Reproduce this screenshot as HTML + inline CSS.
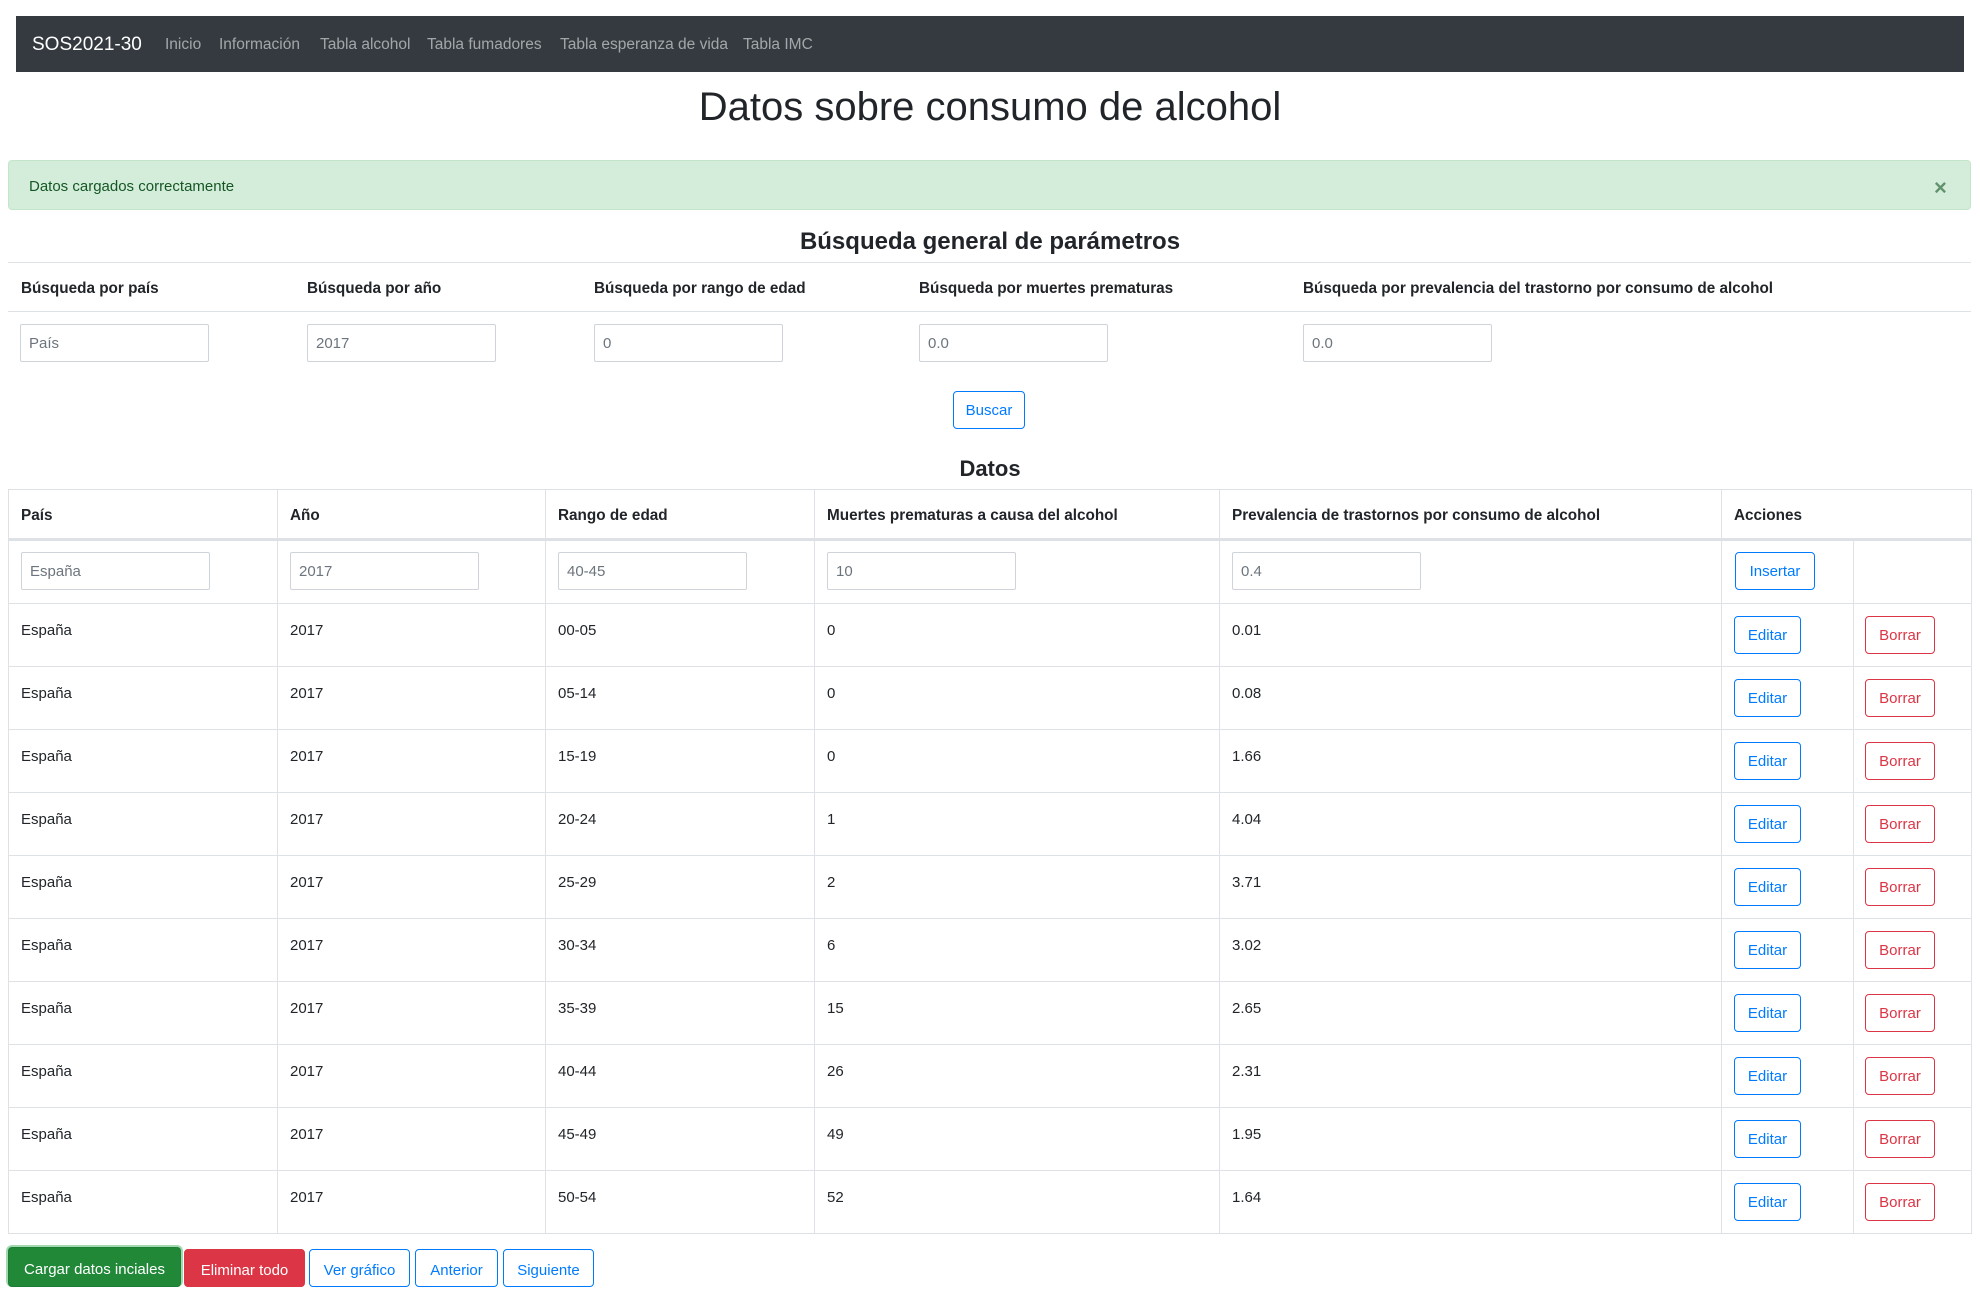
<!DOCTYPE html>
<html><head><meta charset="utf-8"><style>
*{box-sizing:border-box;margin:0;padding:0}
body{width:1980px;height:1280px;overflow:hidden;background:#fff;font-family:"Liberation Sans",sans-serif;font-size:16px;color:#212529;position:relative}
.a{position:absolute;white-space:nowrap}
.nav{left:16px;top:16px;width:1948px;height:56px;background:#343a40}
.nl{color:rgba(255,255,255,.55);font-size:15.5px}
.hl{position:absolute;height:1px;background:#dee2e6}
.vl{position:absolute;width:1px;background:#dee2e6}
.inp{position:absolute;border:1px solid #ced4da;border-radius:2px;height:38px;color:#6c757d;font-size:15px;line-height:38px;padding-left:8px;width:189px}
.b{position:absolute;border:1px solid #007bff;border-radius:4px;color:#007bff;font-size:15px;text-align:center;line-height:38px;height:38px}
.r{border-color:#dc3545;color:#dc3545}
.th{font-weight:bold;font-size:15.3px}
.td{font-size:15px}
</style></head><body>
<div class="a nav"></div>
<div class="a" style="left:32px;top:34px;color:#fff;font-size:19px">SOS2021-30</div>
<div class="a nl" style="left:165px;top:36px">Inicio</div>
<div class="a nl" style="left:219px;top:36px">Información</div>
<div class="a nl" style="left:320px;top:36px">Tabla alcohol</div>
<div class="a nl" style="left:427px;top:36px">Tabla fumadores</div>
<div class="a nl" style="left:560px;top:36px">Tabla esperanza de vida</div>
<div class="a nl" style="left:743px;top:36px">Tabla IMC</div>
<div class="a" style="left:0;width:1980px;text-align:center;top:82px;font-size:40px;line-height:50px">Datos sobre consumo de alcohol</div>
<div class="a" style="left:8px;top:160px;width:1963px;height:50px;background:#d4edda;border:1px solid #c3e6cb;border-radius:4px"></div>
<div class="a" style="left:29px;top:178px;color:#155724;font-size:15px">Datos cargados correctamente</div>
<div class="a" style="left:1934px;top:175px;color:#155724;font-size:22px;font-weight:bold;opacity:.6">×</div>
<div class="a" style="left:0;width:1980px;text-align:center;top:228px;font-size:24px;font-weight:bold">Búsqueda general de parámetros</div>
<div class="hl" style="left:8px;top:262px;width:1963px"></div>
<div class="hl" style="left:8px;top:311px;width:1963px"></div>
<div class="a th" style="left:21px;top:280px">Búsqueda por país</div>
<div class="a th" style="left:307px;top:280px">Búsqueda por año</div>
<div class="a th" style="left:594px;top:280px">Búsqueda por rango de edad</div>
<div class="a th" style="left:919px;top:280px">Búsqueda por muertes prematuras</div>
<div class="a th" style="left:1303px;top:280px">Búsqueda por prevalencia del trastorno por consumo de alcohol</div>
<div class="inp" style="left:20px;top:324px">País</div>
<div class="inp" style="left:307px;top:324px">2017</div>
<div class="inp" style="left:594px;top:324px">0</div>
<div class="inp" style="left:919px;top:324px">0.0</div>
<div class="inp" style="left:1303px;top:324px">0.0</div>
<div class="b" style="left:953px;top:391px;width:72px">Buscar</div>
<div class="a" style="left:0;width:1980px;text-align:center;top:456px;font-size:22px;font-weight:bold">Datos</div>
<div class="hl" style="left:8px;top:489px;width:1963px"></div>
<div class="hl" style="left:8px;top:538px;width:1963px;height:3px"></div>
<div class="vl" style="left:8px;top:489px;height:745px"></div>
<div class="vl" style="left:277px;top:489px;height:745px"></div>
<div class="vl" style="left:545px;top:489px;height:745px"></div>
<div class="vl" style="left:814px;top:489px;height:745px"></div>
<div class="vl" style="left:1219px;top:489px;height:745px"></div>
<div class="vl" style="left:1721px;top:489px;height:745px"></div>
<div class="vl" style="left:1853px;top:541px;height:693px"></div>
<div class="vl" style="left:1971px;top:489px;height:745px"></div>
<div class="a th" style="left:21px;top:507px">País</div>
<div class="a th" style="left:290px;top:507px">Año</div>
<div class="a th" style="left:558px;top:507px">Rango de edad</div>
<div class="a th" style="left:827px;top:507px">Muertes prematuras a causa del alcohol</div>
<div class="a th" style="left:1232px;top:507px">Prevalencia de trastornos por consumo de alcohol</div>
<div class="a th" style="left:1734px;top:507px">Acciones</div>
<div class="inp" style="left:21px;top:552px">España</div>
<div class="inp" style="left:290px;top:552px">2017</div>
<div class="inp" style="left:558px;top:552px">40-45</div>
<div class="inp" style="left:827px;top:552px">10</div>
<div class="inp" style="left:1232px;top:552px">0.4</div>
<div class="b" style="left:1735px;top:552px;width:80px">Insertar</div>
<div id="rows"></div>
<script>
var d=[["00-05","0","0.01"],["05-14","0","0.08"],["15-19","0","1.66"],["20-24","1","4.04"],["25-29","2","3.71"],["30-34","6","3.02"],["35-39","15","2.65"],["40-44","26","2.31"],["45-49","49","1.95"],["50-54","52","1.64"]];
var h="";
for(var i=0;i<10;i++){var t=603+i*63;
h+='<div class="hl" style="left:8px;top:'+t+'px;width:1963px"></div>';
h+='<div class="a td" style="left:21px;top:'+(t+19)+'px">España</div><div class="a td" style="left:290px;top:'+(t+19)+'px">2017</div><div class="a td" style="left:558px;top:'+(t+19)+'px">'+d[i][0]+'</div><div class="a td" style="left:827px;top:'+(t+19)+'px">'+d[i][1]+'</div><div class="a td" style="left:1232px;top:'+(t+19)+'px">'+d[i][2]+'</div>';
h+='<div class="b" style="left:1734px;top:'+(t+13)+'px;width:67px">Editar</div><div class="b r" style="left:1865px;top:'+(t+13)+'px;width:70px">Borrar</div>';}
h+='<div class="hl" style="left:8px;top:1233px;width:1963px"></div>';
document.getElementById("rows").innerHTML=h;
</script>
<div class="a" style="left:6px;top:1245px;width:177px;height:42px;border-radius:6px;background:#a3d9b0"></div>
<div class="b" style="left:8px;top:1247px;width:173px;height:40px;line-height:44px;background:#218838;border-color:#1e7e34;color:#fff">Cargar datos inciales</div>
<div class="b r" style="left:184px;top:1249px;width:121px;line-height:42px;background:#dc3545;color:#fff">Eliminar todo</div>
<div class="b" style="left:309px;top:1249px;width:101px;line-height:42px">Ver gráfico</div>
<div class="b" style="left:415px;top:1249px;width:83px;line-height:42px">Anterior</div>
<div class="b" style="left:503px;top:1249px;width:91px;line-height:42px">Siguiente</div>
</body></html>
